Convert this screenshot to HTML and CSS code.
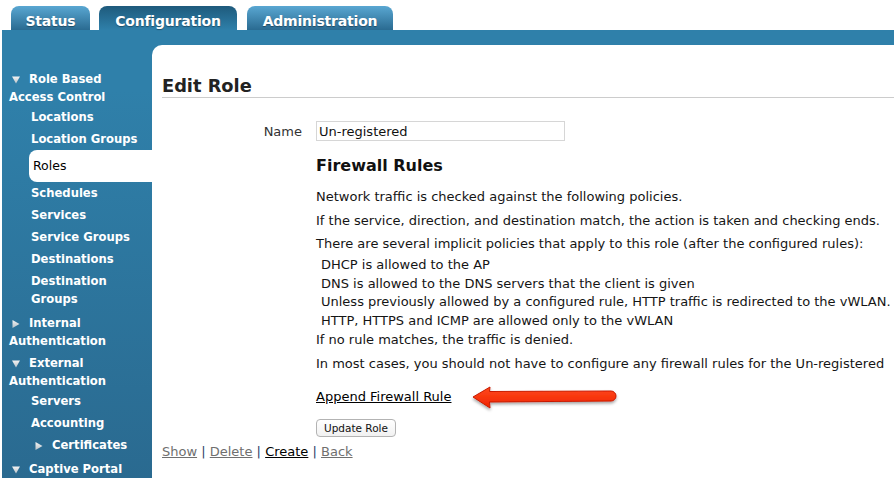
FILE: index.html
```html
<!DOCTYPE html>
<html>
<head>
<meta charset="utf-8">
<title>Edit Role</title>
<link rel="stylesheet" href="styles.css">
</head>
<body>
<div class="tabs">
  <div class="tab t-status">Status</div>
  <div class="tab active t-config">Configuration</div>
  <div class="tab t-admin">Administration</div>
</div>
<div class="frame">
  <nav class="sidebar">
    <div class="ghead"><svg class="tri" viewBox="0 0 8 8"><defs><linearGradient id="tg" x1="0" y1="0" x2="0" y2="1"><stop offset="0" stop-color="#f4f4f4"/><stop offset="1" stop-color="#b9c2c8"/></linearGradient></defs><path d="M0 0.5H8L4 7.5Z" fill="url(#tg)"/></svg>Role Based<br>Access Control</div>
    <div class="item">Locations</div>
    <div class="item">Location Groups</div>
    <div class="item sel">Roles</div>
    <div class="item">Schedules</div>
    <div class="item">Services</div>
    <div class="item">Service Groups</div>
    <div class="item">Destinations</div>
    <div class="item">Destination<br>Groups</div>
    <div class="ghead"><svg class="tri" viewBox="0 0 8 8"><path d="M0.5 0L7.5 4L0.5 8Z" fill="url(#tg)"/></svg>Internal<br>Authentication</div>
    <div class="ghead"><svg class="tri" viewBox="0 0 8 8"><path d="M0 0.5H8L4 7.5Z" fill="url(#tg)"/></svg>External<br>Authentication</div>
    <div class="item">Servers</div>
    <div class="item">Accounting</div>
    <div class="item sub2"><svg class="tri" viewBox="0 0 8 8"><path d="M0.5 0L7.5 4L0.5 8Z" fill="url(#tg)"/></svg>Certificates</div>
    <div class="ghead"><svg class="tri" viewBox="0 0 8 8"><path d="M0 0.5H8L4 7.5Z" fill="url(#tg)"/></svg>Captive Portal</div>
  </nav>
  <main class="content">
    <h1 class="title">Edit Role</h1>
    <div class="row">
      <label class="label" for="name">Name</label>
      <input class="field" id="name" type="text" value="Un-registered">
    </div>
    <div class="rules">
      <h2 class="subtitle">Firewall Rules</h2>
      <p class="p-first">Network traffic is checked against the following policies.</p>
      <p>If the service, direction, and destination match, the action is taken and checking ends.</p>
      <p>There are several implicit policies that apply to this role (after the configured rules):</p>
      <ul class="policies">
        <li>DHCP is allowed to the AP</li>
        <li>DNS is allowed to the DNS servers that the client is given</li>
        <li>Unless previously allowed by a configured rule, HTTP traffic is redirected to the vWLAN.</li>
        <li>HTTP, HTTPS and ICMP are allowed only to the vWLAN</li>
      </ul>
      <p class="p-deny">If no rule matches, the traffic is denied.</p>
      <p class="p-most">In most cases, you should not have to configure any firewall rules for the Un-registered</p>
      <div class="append"><a href="#" class="link-strong">Append Firewall Rule</a></div>
      <div class="btnrow"><button class="btn" type="button">Update Role</button></div>
    </div>
    <div class="links">
      <a href="#" class="link-dim">Show</a> <span class="sep">|</span>
      <a href="#" class="link-dim">Delete</a> <span class="sep">|</span>
      <a href="#" class="link-strong">Create</a> <span class="sep">|</span>
      <a href="#" class="link-dim">Back</a>
    </div>
  </main>
</div>
<svg class="arrow" viewBox="0 0 152 34" width="152" height="34">
  <defs>
    <linearGradient id="ag" x1="0" y1="0" x2="0" y2="1">
      <stop offset="0" stop-color="#ff4a1c"/>
      <stop offset="1" stop-color="#f02200"/>
    </linearGradient>
    <filter id="sh" x="-10%" y="-30%" width="120%" height="180%">
      <feDropShadow dx="0" dy="2" stdDeviation="1.5" flood-color="#000" flood-opacity="0.35"/>
    </filter>
  </defs>
  <path d="M3 14 L20 4 L19.5 8.5 L141 8 A5 5 0 0 1 141 18 L19.5 19 L20 25 Z" fill="url(#ag)" stroke="#c81a00" stroke-width="1" stroke-linejoin="round" filter="url(#sh)"/>
</svg>
</body>
</html>
```

FILE: styles.css
```css
html, body {
  margin: 0;
  height: 100%;
  overflow: hidden;
  background: #fff;
}

body {
  position: relative;
  font-family: "DejaVu Sans", Verdana, sans-serif;
  font-size: 13px;
  color: #151515;
}

.tabs {
  display: flex;
  align-items: flex-end;
  height: 30px;
  padding-left: 11px;
  gap: 9px;
}

.tab {
  box-sizing: border-box;
  height: 24px;
  padding-top: 6px;
  line-height: 18px;
  text-align: center;
  font-weight: bold;
  font-size: 14px;
  letter-spacing: -0.2px;
  color: #fff;
  border-radius: 8px 8px 0 0;
  background: linear-gradient(#59a7d2, #2a6b91);
  text-shadow: 0 1px 1px rgba(0, 0, 0, 0.35);
}

.tab.active {
  background: linear-gradient(#1e5a7c, #2f80aa);
}

.t-status { width: 79px; }
.t-config { width: 138px; }
.t-admin { width: 146px; margin-left: 1px; }

.frame {
  display: flex;
  margin-left: 2px;
  min-height: calc(100vh - 30px);
  background: linear-gradient(#2f80aa 0, #2f80aa 60px, #2a6a90 100%);
}

.sidebar {
  width: 150px;
  flex: none;
  padding-top: 36px;
  font-weight: bold;
  font-size: 11.6px;
  color: #fff;
}

.ghead {
  padding: 4px 6px 0 7px;
  line-height: 18px;
}

.item {
  padding: 2px 6px 2px 29px;
  line-height: 18px;
}

.item.sub2 {
  padding-left: 33px;
}

.item.sel {
  margin-left: 27px;
  padding: 7px 0 7px 4px;
  background: #fff;
  color: #000;
  font-weight: normal;
  font-size: 12.5px;
  border-radius: 8px 0 0 8px;
}

.tri {
  display: inline-block;
  width: 8px;
  height: 8px;
  margin: 0 9px 0 3px;
  vertical-align: -0.5px;
}

.item .tri {
  margin-left: 0;
}

.content {
  flex: 1;
  min-width: 0;
  margin-top: 15px;
  padding: 30px 0 0 10px;
  background: #fff;
  border-top-left-radius: 10px;
  white-space: nowrap;
  overflow: hidden;
}

.title {
  margin: 0;
  font-size: 17.8px;
  line-height: 22px;
  color: #222;
  border-bottom: 1px solid #cccccc;
}

.row {
  display: flex;
  align-items: center;
  margin-top: 23px;
  height: 20px;
}

.label {
  width: 140px;
  margin-right: 14px;
  text-align: right;
  color: #333;
}

.field {
  box-sizing: border-box;
  width: 249px;
  height: 20px;
  margin: 0;
  padding: 0 2px;
  border: 1px solid #d6d6d6;
  font-family: "DejaVu Sans", Verdana, sans-serif;
  font-size: 13px;
  color: #111;
  outline: none;
}

.rules {
  margin-left: 154px;
}

.subtitle {
  margin: 15px 0 0;
  font-size: 16px;
  line-height: 20px;
  color: #111;
}

.rules p {
  margin: 5.5px 0 0;
  line-height: 18px;
}

.rules p.p-first { margin-top: 12px; }

.policies {
  margin: 3px 0 0;
  padding: 0 0 0 5px;
  list-style: none;
}

.policies li {
  line-height: 18.5px;
}

.rules p.p-deny { margin-top: 1px; }
.rules p.p-most { margin-top: 6px; }

.append {
  margin-top: 15px;
  line-height: 18px;
}

.btnrow {
  margin-top: 13px;
  height: 18px;
}

.btn {
  box-sizing: border-box;
  width: 80px;
  height: 18px;
  padding: 0;
  border: 1px solid #b3b3b3;
  border-radius: 4px;
  background: linear-gradient(#ffffff, #f1f1f1);
  font-family: "DejaVu Sans", Verdana, sans-serif;
  font-size: 10.5px;
  color: #111;
  vertical-align: top;
}

.links {
  margin-top: 6px;
  line-height: 18px;
}

.link-strong {
  color: #000;
  text-decoration: underline;
}

.link-dim {
  color: #6f6f6f;
  text-decoration: underline;
}

.sep {
  color: #2b3f66;
}

.arrow {
  position: absolute;
  left: 470px;
  top: 383px;
}
```
